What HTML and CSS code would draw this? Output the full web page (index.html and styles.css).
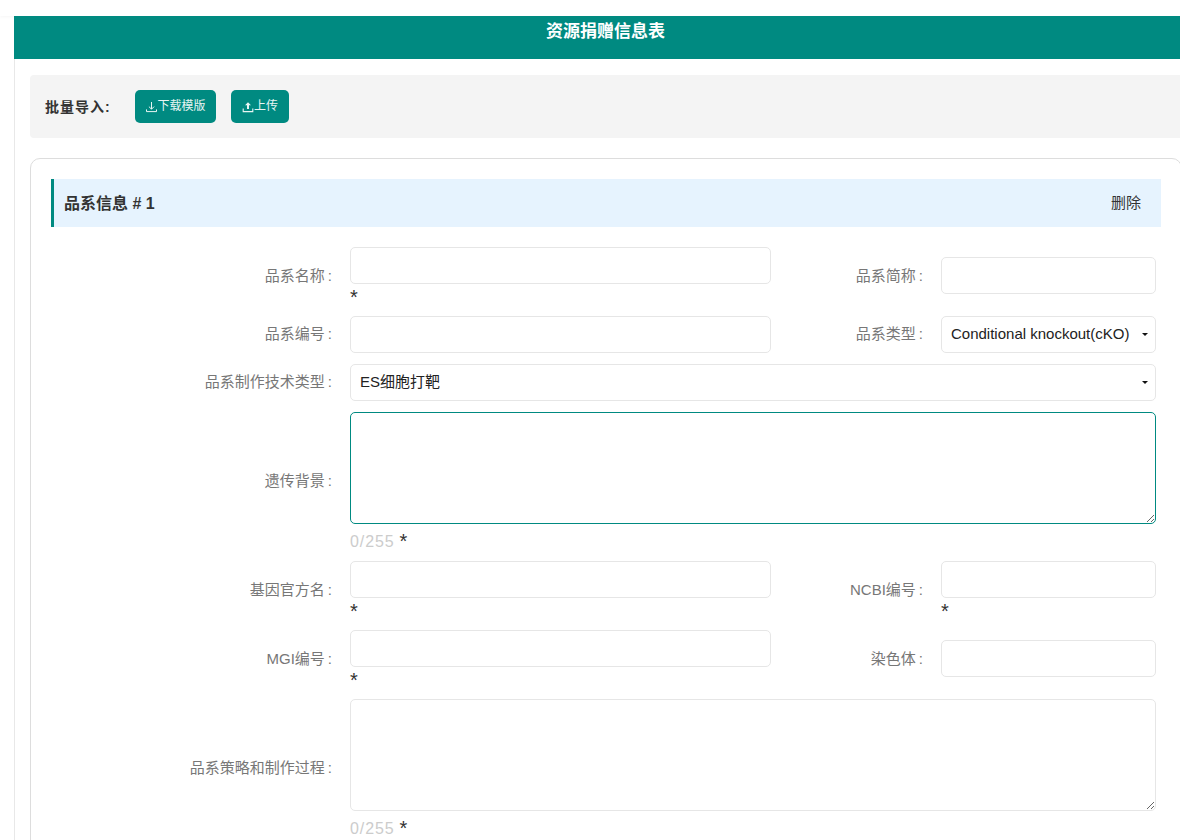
FILE: index.html
```html
<!DOCTYPE html>
<html lang="zh-CN">
<head>
  <meta charset="UTF-8" />
  <title>资源捐赠信息表</title>
  <link rel="stylesheet" href="styles.css">
</head>
<body>
  <div class="topbar"></div>
  <div class="page">
    <div class="page-title">资源捐赠信息表</div>
    <div class="content">
      <div class="import-bar">
        <span class="import-label">批量导入:</span>
        <button class="btn btn-download">
          <svg class="btn-icon" viewBox="0 0 12 12"><path d="M6.5 1v7M3.9 5.6l2.6 2.6 2.6-2.6M1.5 8.4v2.2h10V8.4" fill="none" stroke="currentColor" stroke-width="1"/></svg><span class="btn-text">下载模版</span>
        </button>
        <button class="btn btn-upload">
          <svg class="btn-icon" viewBox="0 0 12 12"><path d="M6 1.2 3 4.2h2V8h2V4.2h2z" fill="currentColor"/><path d="M1.2 7.4v3.2h9.6V7.4" fill="none" stroke="currentColor" stroke-width="1.1"/></svg><span class="btn-text">上传</span>
        </button>
      </div>

      <div class="card">
        <div class="section-head">
          <span class="section-title">品系信息 # 1</span>
          <span class="section-delete">删除</span>
        </div>

        <div class="row">
          <label class="label">品系名称<span class="colon">:</span></label>
          <div class="field field-half">
            <input class="input" type="text">
            <div class="star">*</div>
          </div>
          <label class="label label-side">品系简称<span class="colon">:</span></label>
          <div class="field field-side field-lift">
            <input class="input" type="text">
          </div>
        </div>

        <div class="row">
          <label class="label">品系编号<span class="colon">:</span></label>
          <div class="field field-half">
            <input class="input" type="text">
          </div>
          <label class="label label-side">品系类型<span class="colon">:</span></label>
          <div class="field field-side select-wrap">
            <select class="input select"><option>Conditional knockout(cKO)</option></select>
          </div>
        </div>

        <div class="row">
          <label class="label">品系制作技术类型<span class="colon">:</span></label>
          <div class="field field-full select-wrap">
            <select class="input select"><option>ES细胞打靶</option></select>
          </div>
        </div>

        <div class="row">
          <label class="label">遗传背景<span class="colon">:</span></label>
          <div class="field field-full">
            <textarea class="input textarea textarea-focus"></textarea>
            <div class="counter"><span class="count">0/255</span><span class="count-star">*</span></div>
          </div>
        </div>

        <div class="row">
          <label class="label">基因官方名<span class="colon">:</span></label>
          <div class="field field-half">
            <input class="input" type="text">
            <div class="star">*</div>
          </div>
          <label class="label label-side">NCBI编号<span class="colon">:</span></label>
          <div class="field field-side">
            <input class="input" type="text">
            <div class="star">*</div>
          </div>
        </div>

        <div class="row">
          <label class="label">MGI编号<span class="colon">:</span></label>
          <div class="field field-half">
            <input class="input" type="text">
            <div class="star">*</div>
          </div>
          <label class="label label-side">染色体<span class="colon">:</span></label>
          <div class="field field-side field-lift">
            <input class="input" type="text">
          </div>
        </div>

        <div class="row">
          <label class="label">品系策略和制作过程<span class="colon">:</span></label>
          <div class="field field-full">
            <textarea class="input textarea"></textarea>
            <div class="counter"><span class="count">0/255</span><span class="count-star">*</span></div>
          </div>
        </div>
      </div>
    </div>
  </div>
</body>
</html>
```

FILE: styles.css
```css
html, body {
  height: 840px;
  overflow: hidden;
}

body {
  margin: 0;
  background: #fff;
  color: #333;
  font-family: "Liberation Sans", "Noto Sans CJK SC", sans-serif;
  font-size: 14px;
}

.topbar {
  height: 16px;
  background: #fff;
  box-shadow: 0 1px 3px rgba(0, 0, 0, 0.04);
}

.page {
  width: 1166px;
  margin-left: 14px;
  border-left: 1px solid #e8e8e8;
  box-sizing: border-box;
  position: relative;
}

.page-title {
  height: 43px;
  margin-left: -1px;
  padding: 4px 0 0 17px;
  box-sizing: border-box;
  background: #008a81;
  color: #fff;
  font-size: 17px;
  font-weight: bold;
  line-height: 24px;
  text-align: center;
}

.content {
  padding: 16px 0 0 15px;
}

.import-bar {
  display: flex;
  align-items: center;
  height: 63px;
  width: 1170px;
  padding-left: 15px;
  box-sizing: border-box;
  background: #f4f4f4;
  border-radius: 4px;
}

.import-label {
  width: 90px;
  padding-bottom: 2px;
  font-weight: bold;
  color: #333;
  letter-spacing: 1px;
}

.btn {
  display: flex;
  align-items: center;
  justify-content: center;
  height: 33px;
  padding: 0;
  border: none;
  border-radius: 5px;
  background: #008a81;
  color: #e8f5f3;
  font-family: inherit;
  font-size: 12px;
}

.btn-download {
  width: 81px;
  margin-right: 15px;
}

.btn-upload {
  width: 58px;
}

.btn-text {
  padding-bottom: 4px;
}

.btn-icon {
  width: 12px;
  height: 12px;
  flex: none;
}

.card {
  width: 1152px;
  margin-top: 20px;
  padding: 20px 20px 40px;
  box-sizing: border-box;
  border: 1px solid #ddd;
  border-radius: 10px;
}

.section-head {
  display: flex;
  align-items: center;
  justify-content: space-between;
  height: 48px;
  margin-bottom: 20px;
  padding: 0 20px 0 10px;
  box-sizing: border-box;
  background: #e6f3fe;
  border-left: 3px solid #008a81;
}

.section-title {
  padding-bottom: 3px;
  font-size: 16px;
  font-weight: bold;
  color: #333;
}

.section-delete {
  padding-bottom: 3px;
  font-size: 15px;
  color: #333;
}

.row {
  display: flex;
  align-items: center;
  margin-bottom: 11px;
}

.label {
  flex: none;
  width: 281px;
  margin-right: 18px;
  padding-bottom: 1px;
  color: #777;
  font-size: 15px;
  line-height: 22px;
  text-align: right;
}

.colon {
  margin-left: 3px;
}

.label-side {
  width: 152px;
  margin-right: 18px;
}

.field {
  flex: none;
}

.field-half {
  width: 421px;
}

.field-side {
  width: 215px;
}

.field-full {
  width: 806px;
}

.field-lift {
  padding-bottom: 1px;
}

.input {
  display: block;
  width: 100%;
  height: 37px;
  margin: 0;
  padding: 0 10px;
  box-sizing: border-box;
  background: #fff;
  border: 1px solid #e6e6e6;
  border-radius: 5px;
  color: #333;
  font-family: inherit;
  font-size: 15px;
  outline: none;
}

.select {
  appearance: none;
  padding: 0 9px 2px;
  color: #222;
}

.select-wrap {
  position: relative;
}

.select-wrap::after {
  content: "";
  position: absolute;
  right: 8px;
  top: 17px;
  border-top: 3px solid #111;
  border-left: 3px solid transparent;
  border-right: 3px solid transparent;
}

.textarea {
  height: 112px;
  padding: 6px 10px;
}

.textarea-focus {
  border-color: #008a81;
}

.star {
  height: 21px;
  color: #333;
  font-size: 20px;
  line-height: 27px;
}

.counter {
  height: 26px;
  font-size: 16px;
  line-height: 36px;
}

.count {
  color: #ccc;
  letter-spacing: 0.9px;
}

.count-star {
  margin-left: 5px;
  color: #333;
  font-size: 20px;
  line-height: 20px;
  vertical-align: -1px;
}
```
